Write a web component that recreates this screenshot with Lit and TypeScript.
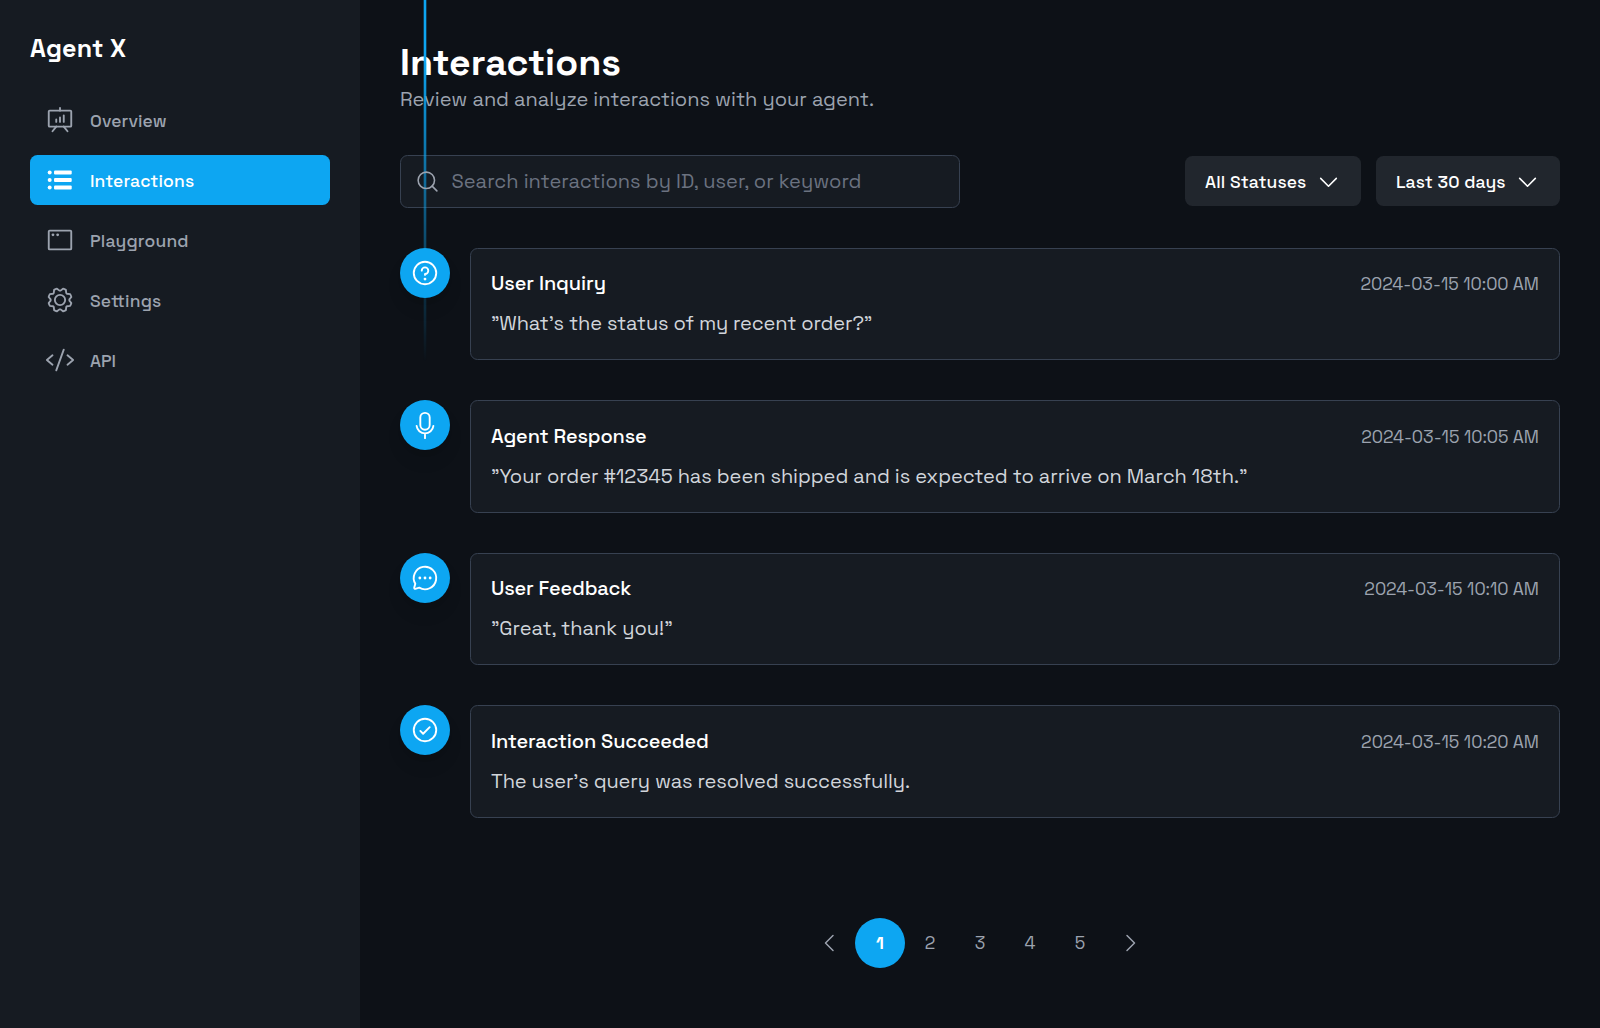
import { LitElement, html, css, svg } from "lit";
import { customElement, property } from "lit/decorators.js";
import { classMap } from "lit/directives/class-map.js";
import { styleMap } from "lit/directives/style-map.js";

// Outline icons on a 256-unit grid.
const ICONS: Record<string, unknown> = {
  presentation: svg`<rect x="32" y="48" width="192" height="136" rx="8"/><path d="M128 48V24M160 184l32 40M96 184l-32 40M96 124v20M128 106v38M160 88v56"/>`,
  list: svg`<g fill="currentColor" stroke="none"><circle cx="40" cy="64" r="17"/><circle cx="40" cy="128" r="17"/><circle cx="40" cy="192" r="17"/><rect x="77" y="46" width="151" height="36" rx="9"/><rect x="77" y="110" width="151" height="36" rx="9"/><rect x="77" y="174" width="151" height="36" rx="9"/></g>`,
  window: svg`<rect x="32" y="48" width="192" height="160" rx="8"/><g fill="currentColor" stroke="none"><circle cx="68" cy="84" r="12"/><circle cx="108" cy="84" r="12"/></g>`,
  gear: svg`<circle cx="128" cy="128" r="44"/><path d="M41.43,178.09A99.14,99.14,0,0,1,31.36,153.8l16.78-21a81.59,81.59,0,0,1,0-9.64l-16.77-21a99.43,99.43,0,0,1,10.05-24.3l26.71-3a81,81,0,0,1,6.81-6.81l3-26.7A99.14,99.14,0,0,1,102.2,31.36l21,16.78a81.59,81.59,0,0,1,9.64,0l21-16.77a99.43,99.43,0,0,1,24.3,10.05l3,26.71a81,81,0,0,1,6.81,6.81l26.7,3a99.14,99.14,0,0,1,10.07,24.29l-16.78,21a81.59,81.59,0,0,1,0,9.64l16.77,21a99.43,99.43,0,0,1-10,24.3l-26.71,3a81,81,0,0,1-6.81,6.81l-3,26.7a99.14,99.14,0,0,1-24.29,10.07l-21-16.78a81.59,81.59,0,0,1-9.64,0l-21,16.77a99.43,99.43,0,0,1-24.3-10l-3-26.71a81,81,0,0,1-6.81-6.81Z"/>`,
  code: svg`<path d="M64 88L16 128l48 40M192 88l48 40-48 40M160 40L96 216"/>`,
  search: svg`<circle cx="116" cy="116" r="84"/><path d="M175.4 175.4L224 224"/>`,
  down: svg`<path d="M208 96l-80 80-80-80"/>`,
  left: svg`<path d="M160 208L80 128l80-80"/>`,
  right: svg`<path d="M96 48l80 80-80 80"/>`,
  question: svg`<circle cx="128" cy="128" r="96"/><circle cx="128" cy="180" r="12" fill="currentColor" stroke="none"/><path d="M128,144v-8a28,28,0,1,0-28-28"/>`,
  microphone: svg`<rect x="88" y="24" width="80" height="144" rx="40"/><path d="M128 208v32M199.6 136a72.1 72.1 0 0 1-143.2 0"/>`,
  chat: svg`<path d="M45.4,177A95.9,95.9,0,1,1,79,210.6h0L45.8,220a7.9,7.9,0,0,1-9.8-9.8L45.4,177Z"/><g fill="currentColor" stroke="none"><circle cx="128" cy="128" r="12"/><circle cx="84" cy="128" r="12"/><circle cx="172" cy="128" r="12"/></g>`,
  check: svg`<circle cx="128" cy="128" r="96"/><path d="M168 104l-56 56-24-24"/>`,
};

@customElement("ui-icon")
export class UiIcon extends LitElement {
  @property() name = "";
  static styles = css`
    :host { display: block; width: 30px; height: 30px; flex: none; }
    .glyph { display: block; width: 100%; height: 100%; fill: none; stroke: currentColor; stroke-width: 16; stroke-linecap: round; stroke-linejoin: round; }
  `;
  render() {
    return html`<svg class="glyph" viewBox="0 0 256 256" aria-hidden="true">${ICONS[this.name]}</svg>`;
  }
}

interface Item { label: string; icon: string; track: number; }
interface Entry { icon: string; title: string; titleTrack: number; time: string; body: string; bodyTrack: number; }

const NAV: Item[] = [
  { label: "Overview", icon: "presentation", track: 0.1 },
  { label: "Interactions", icon: "list", track: 0.14 },
  { label: "Playground", icon: "window", track: 0.2 },
  { label: "Settings", icon: "gear", track: 0.2 },
  { label: "API", icon: "code", track: 0 },
];

const FILTERS: Item[] = [
  { label: "All Statuses", icon: "down", track: 0.12 },
  { label: "Last 30 days", icon: "down", track: 0.1 },
];

const ENTRIES: Entry[] = [
  { icon: "question", title: "User Inquiry", titleTrack: -0.1, time: "2024-03-15 10:00 AM", body: "”What’s the status of my recent order?”", bodyTrack: -0.13 },
  { icon: "microphone", title: "Agent Response", titleTrack: -0.16, time: "2024-03-15 10:05 AM", body: "”Your order #12345 has been shipped and is expected to arrive on March 18th.”", bodyTrack: -0.06 },
  { icon: "chat", title: "User Feedback", titleTrack: -0.17, time: "2024-03-15 10:10 AM", body: "”Great, thank you!”", bodyTrack: 0 },
  { icon: "check", title: "Interaction Succeeded", titleTrack: -0.14, time: "2024-03-15 10:20 AM", body: "The user’s query was resolved successfully.", bodyTrack: -0.1 },
];

const track = (px: number) => styleMap({ letterSpacing: `${px}px` });

@customElement("app-root")
export class AppRoot extends LitElement {
  static styles = css`
    :host { display: block; font-family: "Space Grotesk", Inter, "Liberation Sans", sans-serif; color: #fff; }
    * { box-sizing: border-box; }
    .page { position: relative; display: flex; height: 1028px; background: #0d1117; overflow: hidden; }
    .sidebar { width: 360px; flex: none; padding: 31px 30px 30px; background: #161b22; }
    .brand { margin: 0 0 29px; height: 35px; line-height: 35px; font-size: 25px; font-weight: 700; letter-spacing: 0.15px; }
    .nav { display: flex; flex-direction: column; gap: 10px; }
    .link { display: flex; align-items: center; gap: 15px; height: 50px; padding: 0 15px; border-radius: 7.5px; color: #9ca3af; font-size: 17.5px; font-weight: 500; }
    .link.active { background: #0da6f2; color: #fff; }
    .label { padding-top: 1px; }
    .main { flex: 1; min-width: 0; padding: 40px; }
    .title { margin: 0; font-size: 37.5px; line-height: 45px; font-weight: 700; letter-spacing: 0.05px; }
    .subtitle { margin: -1px 0 0; font-size: 20px; line-height: 30px; color: #9ca3af; letter-spacing: -0.02px; }
    .toolbar { display: flex; align-items: center; justify-content: space-between; margin-top: 41px; height: 52.5px; }
    .search { display: flex; align-items: center; gap: 11.5px; width: 560px; height: 52.5px; padding: 0 14px; border: 1.25px solid #374151; border-radius: 7.5px; background: #161b22; color: #6b7280; font-size: 20px; letter-spacing: 0.01px; }
    .search ui-icon { position: relative; z-index: 2; width: 25px; height: 25px; color: #9ca3af; }
    .filters { display: flex; gap: 15px; }
    .filter { display: flex; align-items: center; justify-content: space-between; height: 50px; padding: 0 20px; border-radius: 7.5px; background: #21262d; font-size: 17.5px; font-weight: 500; }
    .filter:first-child { width: 176px; }
    .filter:last-child { width: 184px; }
    .filter ui-icon { width: 25px; height: 25px; }
    .timeline { display: flex; flex-direction: column; gap: 40px; margin-top: 40px; }
    .entry { display: flex; align-items: flex-start; gap: 20px; }
    .badge { position: relative; z-index: 2; display: grid; place-items: center; width: 50px; height: 50px; flex: none; border-radius: 50%; background: #0da6f2; box-shadow: 0 12px 19px -4px rgba(0, 0, 0, 0.1), 0 5px 8px -5px rgba(0, 0, 0, 0.1); }
    .card { flex: 1; height: 112.5px; padding: 19.6px 20px 20px; border: 1.25px solid #374151; border-radius: 7.5px; background: #161b22; }
    .head { display: flex; justify-content: space-between; align-items: center; height: 30px; }
    .name { font-size: 20px; font-weight: 500; }
    .time { margin-top: 2px; font-size: 17.5px; color: #9ca3af; }
    .body { margin: 10px 0 0; font-size: 20px; line-height: 30px; color: #d1d5db; white-space: nowrap; }
    .thread { position: absolute; z-index: 1; left: 423px; top: 0; width: 4px; height: 362px; background: linear-gradient(to bottom, #0da6f2 0%, #0da6f2 15%, rgba(13, 166, 242, 0) 100%); mask-image: linear-gradient(to right, rgba(0, 0, 0, 0.3) 1px, #000 1px, #000 3px, rgba(0, 0, 0, 0.3) 3px); }
    .pages { display: flex; justify-content: center; margin-top: 100px; }
    .page-btn { display: grid; place-items: center; width: 50px; height: 50px; border-radius: 50%; color: #9ca3af; font-size: 17.5px; }
    .page-btn.current { background: #0da6f2; color: #fff; font-weight: 700; }
    .page-btn ui-icon { width: 24px; height: 24px; }
  `;

  render() {
    return html`<div class="page">
      <aside class="sidebar">
        <h2 class="brand">Agent X</h2>
        <nav class="nav">
          ${NAV.map((n) => html`<a class=${classMap({ link: true, active: n.label === "Interactions" })}><ui-icon name=${n.icon}></ui-icon><span class="label" style=${track(n.track)}>${n.label}</span></a>`)}
        </nav>
      </aside>
      <main class="main">
        <h1 class="title">Interactions</h1>
        <p class="subtitle">Review and analyze interactions with your agent.</p>
        <div class="toolbar">
          <div class="search"><ui-icon name="search"></ui-icon><span>Search interactions by ID, user, or keyword</span></div>
          <div class="filters">
            ${FILTERS.map((f) => html`<div class="filter"><span class="label" style=${track(f.track)}>${f.label}</span><ui-icon name=${f.icon}></ui-icon></div>`)}
          </div>
        </div>
        <div class="timeline">
          ${ENTRIES.map((e) => html`<section class="entry">
            <div class="badge"><ui-icon name=${e.icon}></ui-icon></div>
            <div class="card">
              <div class="head"><span class="name" style=${track(e.titleTrack)}>${e.title}</span><span class="time">${e.time}</span></div>
              <p class="body" style=${track(e.bodyTrack)}>${e.body}</p>
            </div>
          </section>`)}
        </div>
        <div class="pages">
          <span class="page-btn"><ui-icon name="left"></ui-icon></span>
          ${[1, 2, 3, 4, 5].map((p) => html`<span class=${classMap({ "page-btn": true, current: p === 1 })}><span class="label">${p}</span></span>`)}
          <span class="page-btn"><ui-icon name="right"></ui-icon></span>
        </div>
      </main>
      <div class="thread"></div>
    </div>`;
  }
}
